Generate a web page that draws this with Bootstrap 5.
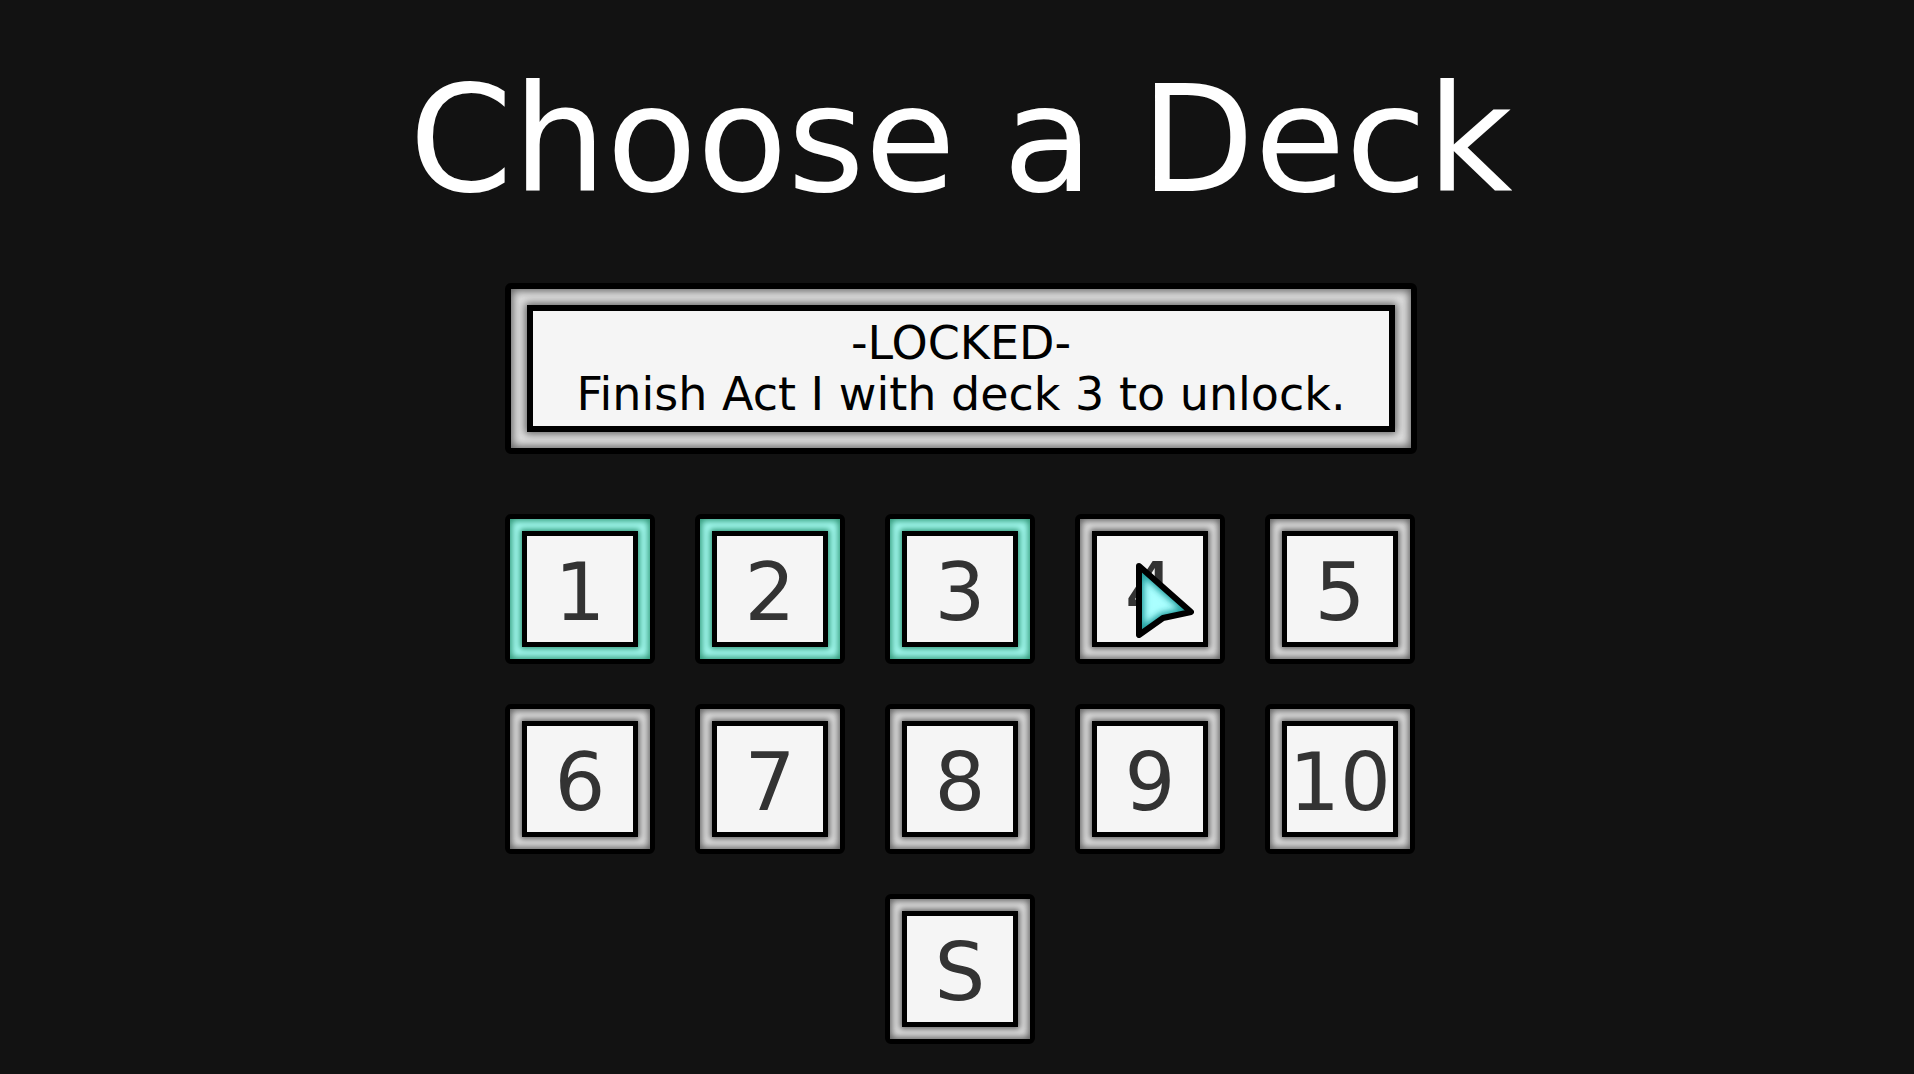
<!DOCTYPE html>
<html lang="en">
<head>
<meta charset="utf-8">
<meta name="viewport" content="width=device-width, initial-scale=1">
<title>Choose a Deck</title>
<link href="https://cdn.jsdelivr.net/npm/bootstrap@5.3.0/dist/css/bootstrap.min.css" rel="stylesheet">
<style>
  body { background: #121212; font-family: "DejaVu Sans", sans-serif; }
  .deck-screen { padding: 52px 0 24px 8px; }
  .deck-title { font-size: 148px; line-height: 176px; color: #fff; font-weight: 400; }
  .deck-area { max-width: 912px; }

  /* Bevelled frame: black edge, shaded ring, black edge, pale face */
  .bevel { border: 5px solid #000; border-radius: 6px; background: #000; padding: 0; }
  .bevel-ring {
    --lit: #e2e2e2; --shade: #606060;
    display: block; padding: 12px; background: var(--lit);
    box-shadow: inset 0 0 7px 2px var(--shade);
  }
  .bevel-face {
    display: flex; align-items: center; justify-content: center;
    border: 5px solid #000; background: #f5f5f5;
    box-shadow: 0 0 6px 2px var(--shade);
  }
  .bevel-open .bevel-ring { --lit: #aafff6; --shade: #2c9474; }

  .notice { border-width: 6px; margin-top: 55px; margin-bottom: 60px; }
  .notice .bevel-ring { padding: 16px; box-shadow: inset 0 0 9px 2px var(--shade); }
  .notice .bevel-face {
    border-width: 6px; min-height: 127px; box-shadow: 0 0 8px 2px var(--shade);
    font-size: 46px; line-height: 51px; color: #000; text-align: center;
  }

  .deck-grid { gap: 40px; max-width: 910px; }
  .deck-tile { width: 150px; }
  .deck-tile .bevel-face { height: 116px; padding-top: 8px; font-size: 80px; line-height: 80px; color: #333; }
  .pointer { left: 55px; top: 44px; width: 64px; height: 80px; pointer-events: none; }
</style>
<script src="https://cdn.jsdelivr.net/npm/bootstrap@5.3.0/dist/js/bootstrap.bundle.min.js" defer></script>
</head>
<body>
<main class="deck-screen">
  <h1 class="deck-title text-center mb-0">Choose a Deck</h1>
  <div class="deck-area mx-auto">
    <section class="bevel notice" role="status">
      <div class="bevel-ring"><div class="bevel-face"><div>-LOCKED-<br>Finish Act I with deck 3 to unlock.</div></div></div>
    </section>
    <div class="deck-grid d-flex flex-wrap justify-content-center">
      <button type="button" class="deck-tile bevel bevel-open"><span class="bevel-ring"><span class="bevel-face">1</span></span></button>
      <button type="button" class="deck-tile bevel bevel-open"><span class="bevel-ring"><span class="bevel-face">2</span></span></button>
      <button type="button" class="deck-tile bevel bevel-open"><span class="bevel-ring"><span class="bevel-face">3</span></span></button>
      <div class="position-relative">
        <button type="button" class="deck-tile bevel" aria-disabled="true"><span class="bevel-ring"><span class="bevel-face">4</span></span></button>
        <svg class="pointer position-absolute" viewBox="0 0 64 80" aria-hidden="true">
          <defs>
            <clipPath id="arrowClip"><path d="M9 8L61 54L33 60L9 77Z"/></clipPath>
            <filter id="soften" x="-30%" y="-30%" width="160%" height="160%"><feGaussianBlur stdDeviation="3"/></filter>
          </defs>
          <path d="M9 8L61 54L33 60L9 77Z" fill="#aaffff"/>
          <g clip-path="url(#arrowClip)"><path d="M9 8L61 54L33 60L9 77Z" fill="none" stroke="#24a0a0" stroke-width="11" filter="url(#soften)"/></g>
          <path d="M9 8L61 54L33 60L9 77Z" fill="none" stroke="#000" stroke-width="6" stroke-linejoin="round"/>
        </svg>
      </div>
      <button type="button" class="deck-tile bevel" aria-disabled="true"><span class="bevel-ring"><span class="bevel-face">5</span></span></button>
      <button type="button" class="deck-tile bevel" aria-disabled="true"><span class="bevel-ring"><span class="bevel-face">6</span></span></button>
      <button type="button" class="deck-tile bevel" aria-disabled="true"><span class="bevel-ring"><span class="bevel-face">7</span></span></button>
      <button type="button" class="deck-tile bevel" aria-disabled="true"><span class="bevel-ring"><span class="bevel-face">8</span></span></button>
      <button type="button" class="deck-tile bevel" aria-disabled="true"><span class="bevel-ring"><span class="bevel-face">9</span></span></button>
      <button type="button" class="deck-tile bevel" aria-disabled="true"><span class="bevel-ring"><span class="bevel-face">10</span></span></button>
      <button type="button" class="deck-tile bevel" aria-disabled="true"><span class="bevel-ring"><span class="bevel-face">S</span></span></button>
    </div>
  </div>
</main>
</body>
</html>
